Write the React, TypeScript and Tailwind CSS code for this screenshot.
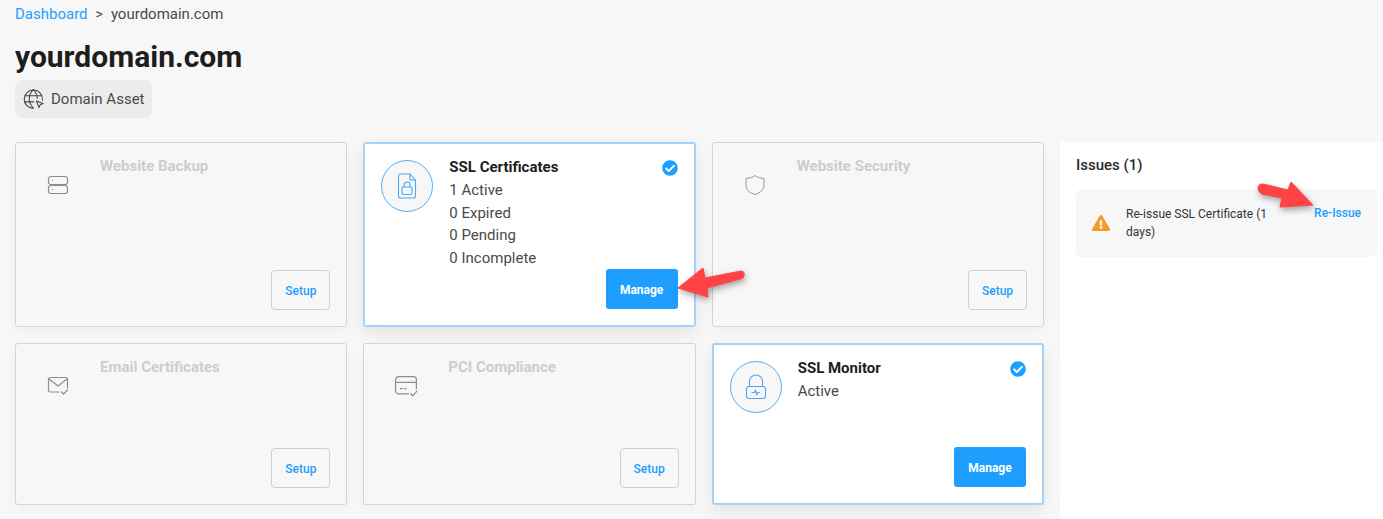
import React from 'react';
import { FaCheckCircle, FaExclamationTriangle } from 'react-icons/fa';

const GlobeIcon = () => (
  <svg width="21" height="22" viewBox="0 0 22 22" fill="none" stroke="#444" strokeWidth="1.1" strokeLinecap="round" strokeLinejoin="round">
    <path d="M20.400 12.200A9.600 9.600 0 1 0 10.600 20.800" />
    <path d="M2.200 7.500h17.400M2.200 14h9" />
    <path d="M10.800 1.200C7.800 4 6.600 7.400 6.600 10.800s1.200 6.800 4.200 9.600" />
    <path d="M10.800 1.200c2.800 2.600 4 5.800 4.200 9" />
    <path d="M14 13l7 2.700-3 1.300-1.300 3z" />
  </svg>
);

const ServerIcon = () => (
  <svg width="22" height="20" viewBox="0 0 22 20" fill="none" stroke="#8e8e8e" strokeWidth="1.200">
    <rect x="1.500" y="1.500" width="19" height="8" rx="2.500" />
    <rect x="1.500" y="10.500" width="19" height="8" rx="2.500" />
    <path d="M5 5.500h1M5 14.500h1" />
  </svg>
);

const ShieldIcon = () => (
  <svg width="22" height="22" viewBox="0 0 22 22" fill="none" stroke="#999" strokeWidth="1" strokeLinejoin="round">
    <path d="M11 1.500c2 1.700 4.800 2.800 9 3v6.500c0 4.700-3.800 8-9 9.500-5.200-1.500-9-4.800-9-9.500V4.500c4.200-.2 7-1.300 9-3z" />
  </svg>
);

const MailCheckIcon = () => (
  <svg width="22" height="20" viewBox="0 0 22 20" fill="none" stroke="#8e8e8e" strokeWidth="1.200" strokeLinecap="round" strokeLinejoin="round">
    <path d="M12 16H3.500a2 2 0 0 1-2-2V3.500a2 2 0 0 1 2-2h15a2 2 0 0 1 2 2V12" />
    <path d="M2 3l9 7 9-7" />
    <path d="M14.500 16l2 2 4-4" />
  </svg>
);

const CardCheckIcon = () => (
  <svg width="25" height="23" viewBox="0 0 24 22" fill="none" stroke="#8e8e8e" strokeWidth="1.200" strokeLinecap="round" strokeLinejoin="round">
    <path d="M14 18H4.500a3 3 0 0 1-3-3V4.500a3 3 0 0 1 3-3h14a3 3 0 0 1 3 3V13" />
    <path d="M1.500 7h20" />
    <path d="M6 13h2M10 13h1.500" />
    <path d="M16 18l2 2 4-4.500" />
  </svg>
);

const FileLockIcon = () => (
  <svg width="20" height="26" viewBox="0 0 20 26" fill="none" stroke="#4fa6f5" strokeWidth="1.100" strokeLinecap="round" strokeLinejoin="round">
    <path d="M13 1H3.500A2 2 0 0 0 1.500 3v20a2 2 0 0 0 2 2h13a2 2 0 0 0 2-2V7z" />
    <path d="M13 1v6h5.500" />
    <rect x="5" y="14" width="10" height="7.500" rx="1.200" />
    <path d="M7 14v-2a3 3 0 0 1 6 0v2" />
  </svg>
);

const LockPulseIcon = () => (
  <svg width="22" height="26" viewBox="0 0 22 26" fill="none" stroke="#4fa6f5" strokeWidth="1.100" strokeLinecap="round" strokeLinejoin="round">
    <rect x="1.500" y="12.500" width="19" height="12" rx="2.500" />
    <path d="M4.500 12.500V7.500a6.500 6.500 0 0 1 13 0v5" />
    <path d="M7 18.500h2.500l1-2.500 1.200 5 1-2.500h1.800" />
  </svg>
);

const RedArrow = ({ className, d, w, h }: { className: string; d: string; w: number; h: number }) => (
  <svg
    width={w}
    height={h}
    viewBox={`0 0 ${w} ${h}`}
    className={`absolute overflow-visible pointer-events-none drop-shadow-[1px_3px_3px_rgba(0,0,0,0.35)] ${className}`}
  >
    <path d={d} fill="#ff4245" stroke="#ff4245" strokeWidth="1" strokeLinejoin="round" />
  </svg>
);

const SetupCard = ({ title, icon }: { title: string; icon: React.ReactNode }) => (
  <div className="flex flex-col justify-between border border-[#d4d4d4] rounded-[3px] bg-[#f7f7f7] pt-[14px] pl-4 pr-4 pb-4 shadow-[0_4px_12px_rgba(0,0,0,0.03)]">
    <div className="flex">
      <div className="w-[52px] h-[52px] mt-[2px] flex items-center justify-center shrink-0">{icon}</div>
      <div className="ml-4 text-[15px] leading-[18px] font-bold text-[#cdcdcd]">{title}</div>
    </div>
    <div className="flex justify-end">
      <button className="w-[59px] h-10 pt-[2px] border border-[#cfcfcf] rounded-[4px] text-xs font-medium text-[#1e9fff]">Setup</button>
    </div>
  </div>
);

const ActiveCard = ({ title, lines, icon }: { title: string; lines: string[]; icon: React.ReactNode }) => (
  <div className="flex flex-col justify-between border-2 border-[#a5d2fb] rounded-[3px] bg-white pt-4 pl-4 pr-4 pb-4 shadow-[0_6px_16px_rgba(0,0,0,0.08)]">
    <div className="flex">
      <div className="w-[52px] h-[52px] rounded-full border border-[#4fb0fb] bg-[#f7f7f7] flex items-center justify-center shrink-0">{icon}</div>
      <div className="ml-4 flex-1">
        <div className="text-[15px] leading-[14px] font-bold text-[#1d1d1d]">{title}</div>
        <div className="mt-[5px] text-[15px] leading-[22.7px] text-[#4a4a4a]">
          {lines.map((l) => (
            <div key={l}>{l}</div>
          ))}
        </div>
      </div>
      <FaCheckCircle className="text-[#1e9fff] text-base shrink-0" />
    </div>
    <div className="flex justify-end -mt-[2px]">
      <button className="w-[72px] h-10 pt-[1px] rounded-[3px] bg-[#1e9fff] text-xs font-bold text-white">Manage</button>
    </div>
  </div>
);

export default function App() {
  return (
    <div className="relative h-[519px] overflow-hidden bg-[#f7f7f7] font-['Roboto',sans-serif]">
      <div className="pl-[15px] pt-[5px] pb-[24px]">
        <div className="flex items-center text-[15px] leading-[18px] text-[#4a4a4a]">
          <span className="text-[#1e9fff]">Dashboard</span>
          <span className="ml-2 text-sm leading-[18px]">&gt;</span>
          <span className="ml-2">yourdomain.com</span>
        </div>
        <h1 className="mt-[14px] text-[30px] leading-[40px] font-bold text-[#1d1d1d]">yourdomain.com</h1>
        <div className="mt-[3px] inline-flex items-center h-[38px] pl-2 pr-[7px] rounded-lg bg-[#ececec] text-[15px] text-[#4a4a4a]">
          <GlobeIcon />
          <span className="ml-[7px]">Domain Asset</span>
        </div>
      </div>

      <div className="flex">
        <div className="ml-[15px] w-[1029px] grid grid-cols-3 grid-rows-[185px_162px] gap-4 shrink-0">
          <SetupCard title="Website Backup" icon={<ServerIcon />} />
          <ActiveCard
            title="SSL Certificates"
            lines={['1 Active', '0 Expired', '0 Pending', '0 Incomplete']}
            icon={<FileLockIcon />}
          />
          <SetupCard title="Website Security" icon={<ShieldIcon />} />
          <SetupCard title="Email Certificates" icon={<MailCheckIcon />} />
          <SetupCard title="PCI Compliance" icon={<CardCheckIcon />} />
          <ActiveCard title="SSL Monitor" lines={['Active']} icon={<LockPulseIcon />} />
        </div>

        <div className="ml-4 flex-1 bg-white pl-4 pr-[6px] pt-[14px] h-[377px]">
          <div className="text-[15px] leading-[18px] font-medium text-[#2b2b2b]">Issues (1)</div>
          <div className="mt-[15px] flex items-center h-[68px] rounded-md bg-[#f7f7f7] pl-4 pr-4">
            <FaExclamationTriangle className="text-[#f39a26] text-lg shrink-0" />
            <div className="ml-4 w-[150px] text-xs leading-[18px] text-[#333]">Re-issue SSL Certificate (1 days)</div>
            <div className="ml-auto self-start mt-[15px] text-xs leading-[18px] font-medium text-[#1e9fff]">Re-Issue</div>
          </div>
        </div>
      </div>

      <RedArrow
        className="left-[678px] top-[268px]"
        w={68}
        h={30}
        d="M0 20 L25 0 L27 10 L63 3 Q67 3 66 8 Q65 11 62 11 L29 20 L30 29 Z"
      />
      <RedArrow
        className="left-[1257px] top-[182px]"
        w={57}
        h={26}
        d="M56 23 L34 0 L31 8 L6 2 Q1 2 1 6 Q1 10 5 12 L25 16 L23 25 Z"
      />
    </div>
  );
}
